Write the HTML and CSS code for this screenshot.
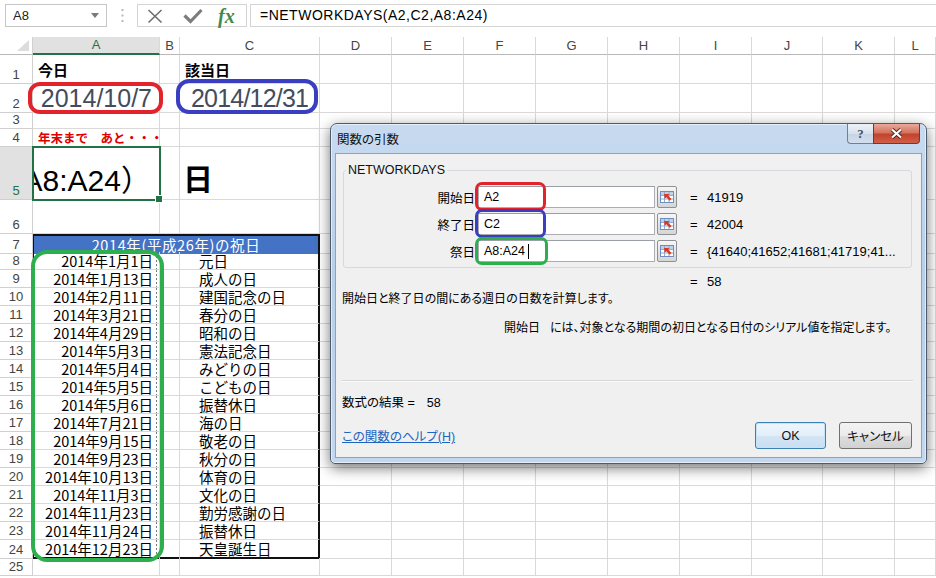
FILE: index.html
```html
<!DOCTYPE html>
<html lang="ja">
<head>
<meta charset="utf-8">
<title>関数の引数</title>
<link rel="stylesheet" href="styles.css">
</head>
<body>
<div class="app">
  <div class="fbar">
    <div class="namebox"><span>A8</span><svg width="8" height="5" viewBox="0 0 8 5"><path d="M0 0h8L4 5z" fill="#7a7a7a"/></svg></div>
    <div class="grip"><svg width="3" height="13" viewBox="0 0 3 13"><rect x="0.5" y="0" width="2" height="2" fill="#b8b8b8"/><rect x="0.5" y="5.5" width="2" height="2" fill="#b8b8b8"/><rect x="0.5" y="11" width="2" height="2" fill="#b8b8b8"/></svg></div>
    <div class="fxbox">
      <svg class="ic-x" width="16" height="16" viewBox="0 0 16 16"><path d="M1.5 2L14.5 14.5M14.5 2L1.5 14.5" stroke="#6e6e6e" stroke-width="1.6"/></svg>
      <svg class="ic-ok" width="20" height="16" viewBox="0 0 20 16"><path d="M1.5 7.5l6 6L18.5 2" fill="none" stroke="#7d7d7d" stroke-width="3.2"/></svg>
      <span class="fx">fx</span>
    </div>
    <div class="formula">=NETWORKDAYS(A2,C2,A8:A24)</div>
  </div>

  <div class="sheet">
    <div class="r hdr"><span class="rh corner"><svg width="12" height="11" viewBox="0 0 12 11"><path d="M12 0V11H0z" fill="#dcdcdc"/></svg></span><span class="ch sel">A</span><span class="ch">B</span><span class="ch">C</span><span class="ch">D</span><span class="ch">E</span><span class="ch">F</span><span class="ch">G</span><span class="ch">H</span><span class="ch">I</span><span class="ch">J</span><span class="ch">K</span><span class="ch">L</span></div>
    <div class="r r1"><span class="rh">1</span><span class="lbl">今日</span><span></span><span class="lbl">該当日</span><span></span><span></span><span></span><span></span><span></span><span></span><span></span><span></span><span></span></div>
    <div class="r r2"><span class="rh">2</span><span class="big a2">2014/10/7</span><span></span><span class="big c2">2014/12/31</span><span></span><span></span><span></span><span></span><span></span><span></span><span></span><span></span><span></span></div>
    <div class="r"><span class="rh">3</span><span></span><span></span><span></span><span></span><span></span><span></span><span></span><span></span><span></span><span></span><span></span><span></span></div>
    <div class="r"><span class="rh">4</span><span class="red">年末まで　あと・・・</span><span></span><span></span><span></span><span></span><span></span><span></span><span></span><span></span><span></span><span></span><span></span></div>
    <div class="r r5"><span class="rh rsel">5</span><span class="a5"><span class="edit">=NETWORKDAYS(A2,C2,A8:A24）</span></span><span></span><span class="day">日</span><span></span><span></span><span></span><span></span><span></span><span></span><span></span><span></span><span></span></div>
    <div class="r r6"><span class="rh">6</span><span></span><span></span><span></span><span></span><span></span><span></span><span></span><span></span><span></span><span></span><span></span><span></span></div>
    <div class="r"><span class="rh">7</span><span class="th">2014年(平成26年)の祝日</span><span></span><span></span><span></span><span></span><span></span><span></span><span></span><span></span><span></span></div>
    <div class="r"><span class="rh">8</span><span class="dt">2014年1月1日</span><span></span><span class="nm">元日</span><span></span><span></span><span></span><span></span><span></span><span></span><span></span><span></span><span></span></div>
    <div class="r"><span class="rh">9</span><span class="dt">2014年1月13日</span><span></span><span class="nm">成人の日</span><span></span><span></span><span></span><span></span><span></span><span></span><span></span><span></span><span></span></div>
    <div class="r"><span class="rh">10</span><span class="dt">2014年2月11日</span><span></span><span class="nm">建国記念の日</span><span></span><span></span><span></span><span></span><span></span><span></span><span></span><span></span><span></span></div>
    <div class="r"><span class="rh">11</span><span class="dt">2014年3月21日</span><span></span><span class="nm">春分の日</span><span></span><span></span><span></span><span></span><span></span><span></span><span></span><span></span><span></span></div>
    <div class="r"><span class="rh">12</span><span class="dt">2014年4月29日</span><span></span><span class="nm">昭和の日</span><span></span><span></span><span></span><span></span><span></span><span></span><span></span><span></span><span></span></div>
    <div class="r"><span class="rh">13</span><span class="dt">2014年5月3日</span><span></span><span class="nm">憲法記念日</span><span></span><span></span><span></span><span></span><span></span><span></span><span></span><span></span><span></span></div>
    <div class="r"><span class="rh">14</span><span class="dt">2014年5月4日</span><span></span><span class="nm">みどりの日</span><span></span><span></span><span></span><span></span><span></span><span></span><span></span><span></span><span></span></div>
    <div class="r"><span class="rh">15</span><span class="dt">2014年5月5日</span><span></span><span class="nm">こどもの日</span><span></span><span></span><span></span><span></span><span></span><span></span><span></span><span></span><span></span></div>
    <div class="r"><span class="rh">16</span><span class="dt">2014年5月6日</span><span></span><span class="nm">振替休日</span><span></span><span></span><span></span><span></span><span></span><span></span><span></span><span></span><span></span></div>
    <div class="r"><span class="rh">17</span><span class="dt">2014年7月21日</span><span></span><span class="nm">海の日</span><span></span><span></span><span></span><span></span><span></span><span></span><span></span><span></span><span></span></div>
    <div class="r"><span class="rh">18</span><span class="dt">2014年9月15日</span><span></span><span class="nm">敬老の日</span><span></span><span></span><span></span><span></span><span></span><span></span><span></span><span></span><span></span></div>
    <div class="r"><span class="rh">19</span><span class="dt">2014年9月23日</span><span></span><span class="nm">秋分の日</span><span></span><span></span><span></span><span></span><span></span><span></span><span></span><span></span><span></span></div>
    <div class="r"><span class="rh">20</span><span class="dt">2014年10月13日</span><span></span><span class="nm">体育の日</span><span></span><span></span><span></span><span></span><span></span><span></span><span></span><span></span><span></span></div>
    <div class="r"><span class="rh">21</span><span class="dt">2014年11月3日</span><span></span><span class="nm">文化の日</span><span></span><span></span><span></span><span></span><span></span><span></span><span></span><span></span><span></span></div>
    <div class="r"><span class="rh">22</span><span class="dt">2014年11月23日</span><span></span><span class="nm">勤労感謝の日</span><span></span><span></span><span></span><span></span><span></span><span></span><span></span><span></span><span></span></div>
    <div class="r"><span class="rh">23</span><span class="dt">2014年11月24日</span><span></span><span class="nm">振替休日</span><span></span><span></span><span></span><span></span><span></span><span></span><span></span><span></span><span></span></div>
    <div class="r"><span class="rh">24</span><span class="dt tb">2014年12月23日</span><span class="tb"></span><span class="nm tb">天皇誕生日</span><span></span><span></span><span></span><span></span><span></span><span></span><span></span><span></span><span></span></div>
    <div class="r"><span class="rh">25</span><span></span><span></span><span></span><span></span><span></span><span></span><span></span><span></span><span></span><span></span><span></span><span></span></div>
  </div>

  <div class="dlg">
    <div class="dlg-title">
      <span class="ttl">関数の引数</span>
      <div class="caps">
        <span class="cap-help">?</span>
        <span class="cap-close"><svg width="13" height="11" viewBox="0 0 13 11"><path d="M2 1.5l9 8M11 1.5l-9 8" stroke="#4a2a26" stroke-width="4"/><path d="M2 1.5l9 8M11 1.5l-9 8" stroke="#fff" stroke-width="2.2"/></svg></span>
      </div>
    </div>
    <div class="dlg-body">
      <fieldset class="grp">
        <legend>NETWORKDAYS</legend>
        <div class="arg"><label>開始日</label><div class="inp">A2</div><span class="ref"><svg width="14" height="12" viewBox="0 0 14 12"><rect x=".5" y=".5" width="13" height="11" fill="#fff" stroke="#6f8fbf"/><path d="M1 1h12v3H1z" fill="#bcd0ea"/><path d="M1 4.5h12M1 8h12M4.5 1v10M9 1v10" stroke="#8fa9d0" stroke-width="1"/><path d="M4 3h5.5L8 4.5l3.5 3.5-1.7 1.7L6.3 6.2 4.8 7.7z" fill="#d8391f"/></svg></span><span class="eq">=</span><span class="val">41919</span></div>
        <div class="arg"><label>終了日</label><div class="inp">C2</div><span class="ref"><svg width="14" height="12" viewBox="0 0 14 12"><rect x=".5" y=".5" width="13" height="11" fill="#fff" stroke="#6f8fbf"/><path d="M1 1h12v3H1z" fill="#bcd0ea"/><path d="M1 4.5h12M1 8h12M4.5 1v10M9 1v10" stroke="#8fa9d0" stroke-width="1"/><path d="M4 3h5.5L8 4.5l3.5 3.5-1.7 1.7L6.3 6.2 4.8 7.7z" fill="#d8391f"/></svg></span><span class="eq">=</span><span class="val">42004</span></div>
        <div class="arg"><label>祭日</label><div class="inp">A8:A24<span class="caret"></span></div><span class="ref"><svg width="14" height="12" viewBox="0 0 14 12"><rect x=".5" y=".5" width="13" height="11" fill="#fff" stroke="#6f8fbf"/><path d="M1 1h12v3H1z" fill="#bcd0ea"/><path d="M1 4.5h12M1 8h12M4.5 1v10M9 1v10" stroke="#8fa9d0" stroke-width="1"/><path d="M4 3h5.5L8 4.5l3.5 3.5-1.7 1.7L6.3 6.2 4.8 7.7z" fill="#d8391f"/></svg></span><span class="eq">=</span><span class="val">{41640;41652;41681;41719;41...</span></div>
      </fieldset>
      <div class="res"><span class="eq">=</span><span class="val">58</span></div>
      <p class="desc">開始日と終了日の間にある週日の日数を計算します。</p>
      <p class="argdesc"><span class="argname">開始日</span>には、対象となる期間の初日となる日付のシリアル値を指定します。</p>
      <hr class="sep">
      <p class="result">数式の結果 =<span class="rv">58</span></p>
      <div class="foot">
        <a class="help">この関数のヘルプ(H)</a>
        <button class="btn ok">OK</button>
        <button class="btn cancel">キャンセル</button>
      </div>
    </div>
  </div>

  <div class="ov ov-a2"></div>
  <div class="ov ov-c2"></div>
  <div class="ov ov-hol"></div>
  <div class="ov ov-d1"></div>
  <div class="ov ov-d2"></div>
  <div class="ov ov-d3"></div>
</div>
</body>
</html>
```

FILE: styles.css
```css
* { box-sizing: border-box; margin: 0; padding: 0; }
html, body { width: 936px; height: 578px; overflow: hidden; background: #fff; }
body { font-family: "Liberation Sans", "Noto Sans CJK JP", sans-serif; color: #000; }
.app { position: relative; width: 936px; height: 578px; overflow: hidden; }

/* formula bar */
.fbar { height: 37px; display: flex; align-items: flex-start; padding: 4px 0 0 5px; }
.namebox { width: 102px; height: 23px; border: 1px solid #c6c6c6; display: flex; align-items: center; justify-content: space-between; padding: 0 7px 0 7px; font-size: 13px; color: #222; }
.grip { width: 30px; height: 23px; display: flex; align-items: center; justify-content: center; }
.fxbox { width: 110px; height: 23px; border: 1px solid #d4d4d4; display: flex; align-items: center; padding-left: 9px; }
.ic-x { margin-right: 20px; }
.ic-ok { margin-right: 15px; }
.fx { font: italic bold 20px/20px "Liberation Serif", serif; color: #3f8b52; }
.formula { flex: 1; height: 23px; margin-left: 3px; border: 1px solid #d4d4d4; border-right: 0; padding-left: 9px; font-size: 14px; letter-spacing: 0.5px; line-height: 21px; }

/* sheet */
.sheet { font-family: "Noto Sans CJK JP", sans-serif; }
.r { display: grid; grid-template-columns: 33px 127px 20px 140px 72px 72px 72px 72px 72px 72px 71px 72px 41px; height: 18px; }
.r > span { border-right: 1px solid #d9d9d9; border-bottom: 1px solid #d9d9d9; display: flex; align-items: flex-end; white-space: nowrap; min-width: 0; font-size: 14px; line-height: 17px; }
.r > .rh { justify-content: center; font: 13px/15px "Liberation Sans", sans-serif; color: #444; border-color: #d0d0d0; padding-bottom: 1px; }
.r1 { height: 29px; }
.r2 { height: 27px; }
.r5 { height: 53px; }
.r6 { height: 34px; }

.hdr > span.ch { justify-content: center; align-items: center; font: 13px/16px "Liberation Sans", sans-serif; color: #444; border-bottom-color: #b8b8b8; }
.hdr > span.sel { background: #e1e1e1; color: #217346; border-bottom: 2px solid #217346; }
.hdr > span.corner { justify-content: flex-end; align-items: flex-end; padding: 0 3px 3px 0; border-bottom-color: #b8b8b8; }
.r > span.rsel { background: #e1e1e1; color: #217346; }

.r > .lbl { font-weight: bold; font-size: 15px; padding: 0 0 5px 5px; }
.r > .big { font: 25px/28px "Liberation Sans", sans-serif; color: #434c5c; }
.r > .a2 { justify-content: flex-end; padding-right: 7px; }
.r > .c2 { padding-left: 11px; letter-spacing: -0.8px; }
.r > .red { color: #e00000; font-weight: bold; font-size: 12.5px; line-height: 15px; padding: 0 0 1px 5px; }

.r > .a5 { position: relative; align-items: stretch; outline: 2px solid #217346; outline-offset: -1px; z-index: 1; }
.a5::after { content: ""; position: absolute; right: -4px; bottom: -4px; width: 6px; height: 6px; background: #217346; border: 1px solid #fff; }
.edit { flex: 1; display: flex; justify-content: flex-end; align-items: flex-end; overflow: hidden; padding: 0 8px 2px 0; font: 30px/32px "Liberation Sans", "Noto Sans CJK JP", sans-serif; }
.r > .day { font-weight: bold; font-size: 30px; line-height: 34px; padding: 0 0 5px 3px; }

.r > .th { grid-column: span 3; justify-content: center; align-items: center; background: #4472c4; color: #fff; font-size: 14.5px; letter-spacing: 0.6px; border-top: 2px solid #111; border-right: 2px solid #111; border-left: 1px solid #111; border-bottom-color: #4472c4; }
.r > .dt { justify-content: flex-end; padding-right: 6px; font-size: 14.5px; border-left: 1px solid #111; background-image: linear-gradient(#7a7a7a 55%, transparent 55%); background-size: 1px 4px; background-repeat: repeat-y; background-position: right 2px top 0; }
.r > .nm { padding-left: 19px; font-size: 14.5px; border-right: 2px solid #111; }
.r > .tb { border-bottom: 2px solid #111; }

/* dialog */
.dlg { position: absolute; left: 330px; top: 123px; width: 597px; border: 1px solid #4e5b6c; border-radius: 7px 7px 5px 5px; background: linear-gradient(180deg, #c7daf0 0%, #b8cfe9 45%, #c3d7ee 100%); box-shadow: 0 4px 14px rgba(0,0,0,.55), inset 0 0 0 1px rgba(255,255,255,.55); padding: 0 4px 5px 4px; }
.dlg-title { height: 29px; display: flex; justify-content: space-between; align-items: flex-start; }
.ttl { padding-left: 2px; font-family: "Noto Sans CJK JP", sans-serif; font-size: 12.5px; line-height: 29px; font-feature-settings: "palt"; color: #111; }
.caps { display: flex; margin-right: 2px; }
.cap-help { width: 26px; height: 20px; border: 1px solid #6f7f94; border-top: 0; border-right: 0; border-radius: 0 0 0 4px; background: linear-gradient(#edf2f8, #d6e1ee 50%, #c6d4e5 51%, #d2deec); display: flex; align-items: center; justify-content: center; font: bold 13px "Liberation Serif", serif; color: #4a4f57; }
.cap-close { width: 47px; height: 20px; border: 1px solid #6b3a33; border-top: 0; border-radius: 0 0 4px 0; background: linear-gradient(#e9a99b, #d4735f 45%, #c2432c 55%, #d0604a); display: flex; align-items: center; justify-content: center; }

.dlg-body { height: 305px; border: 1px solid #8ea2bc; background: #f0f0f0; font-family: "Liberation Sans", "Noto Sans CJK JP", sans-serif; font-size: 12px; font-feature-settings: "palt"; display: flex; flex-direction: column; }
.grp { margin: 8px 9px 0 7px; border: 1px solid #d5d9de; border-radius: 3px; padding: 8px 0 5px 0; }
.grp legend { margin-left: 2px; padding: 0 2px; font-size: 12.5px; line-height: 16px; color: #111; }
.arg { display: flex; align-items: center; height: 22px; margin-bottom: 5px; }
.arg:last-child { margin-bottom: 0; }
.arg label { width: 131px; text-align: right; font-size: 12.5px; }
.inp { width: 177px; height: 22px; margin-left: 3px; background: #fff; border: 1px solid #abadb3; border-top-color: #9a9ea6; padding-left: 5px; font-size: 12.5px; line-height: 20px; display: flex; align-items: center; }
.caret { width: 1px; height: 15px; background: #000; margin-left: 3px; }
.ref { width: 20px; height: 22px; margin-left: 2px; border: 1px solid #8e9093; border-radius: 2px; background: linear-gradient(#f7f7f7, #e2e2e2 55%, #d6d6d6); display: flex; align-items: center; justify-content: center; }
.eq { margin-left: 13px; width: 17px; font-size: 13px; }
.val { font-size: 13px; white-space: nowrap; }

.res { margin-top: 6px; height: 16px; line-height: 16px; padding-left: 354px; display: flex; }
.res .eq { margin-left: 0; }
.desc { margin-top: 1px; padding-left: 6px; line-height: 16px; }
.argdesc { margin-top: 13px; padding-left: 168px; line-height: 16px; }
.argname { margin-right: 10px; }
.sep { margin: 44px 8px 0 6px; border: 0; border-top: 1px solid #d7d7d7; border-bottom: 1px solid #fbfbfb; }
.result { margin-top: 13px; padding-left: 6px; line-height: 16px; font-size: 12.5px; }
.rv { margin-left: 12px; }
.foot { margin-top: 11px; height: 27px; display: flex; align-items: center; padding: 0 9px 0 6px; }
.help { flex: 1; color: #1d64c0; text-decoration: underline; font-size: 12.5px; }
.btn { height: 27px; font-family: "Liberation Sans", "Noto Sans CJK JP", sans-serif; font-size: 12.5px; font-feature-settings: "palt"; color: #111; border: 1px solid #707070; border-radius: 3px; background: linear-gradient(#f3f3f3, #ebebeb 50%, #dedede 51%, #d1d1d1); }
.ok { width: 71px; border-color: #3c7fb1; background: linear-gradient(#eef6fc, #e3eef8 50%, #d2e5f4 51%, #c8dff2); box-shadow: inset 0 0 0 1px #c5e3f8; }
.cancel { width: 73px; margin-left: 13px; }

/* annotation rings */
.ov { position: absolute; pointer-events: none; border-style: solid; }
.ov-a2 { left: 28px; top: 82px; width: 135px; height: 32px; border-width: 4px; border-color: #e3232c; border-radius: 12px; }
.ov-c2 { left: 176px; top: 79px; width: 142px; height: 35px; border-width: 4px; border-color: #3a3ec0; border-radius: 13px; }
.ov-hol { left: 31px; top: 250px; width: 133px; height: 312px; border-width: 4px; border-color: #2eaf4d; border-radius: 16px; }
.ov-d1 { left: 475px; top: 182px; width: 71px; height: 29px; border-width: 3px; border-color: #e3232c; border-radius: 7px; }
.ov-d2 { left: 475px; top: 209px; width: 71px; height: 29px; border-width: 3px; border-color: #3a3ec0; border-radius: 7px; }
.ov-d3 { left: 475px; top: 237px; width: 73px; height: 28px; border-width: 3px; border-color: #2eaf4d; border-radius: 7px; }
```
